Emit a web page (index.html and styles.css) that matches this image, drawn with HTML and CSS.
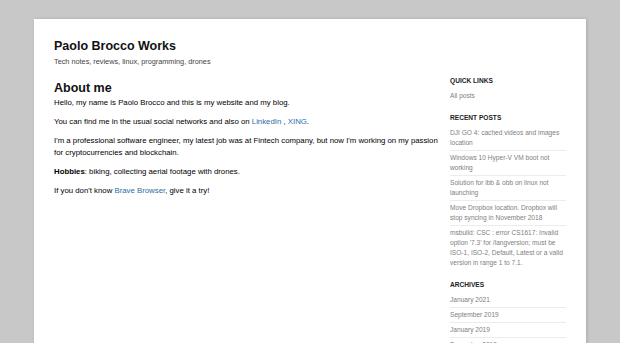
FILE: index.html
```html
<!DOCTYPE html>
<html lang="en">
<head>
  <meta charset="UTF-8">
  <meta name="viewport" content="width=device-width, initial-scale=1.0">
  <title>Paolo Brocco Works</title>
  <link rel="stylesheet" href="styles.css">
</head>
<body>
  <div class="page">
    <div class="header">
      <h1>Paolo Brocco Works</h1>
      <p class="tagline">Tech notes, reviews, linux, programming, drones</p>
    </div>

    <div class="content">
      <div class="main">
        <h2>About me</h2>
        <p>Hello, my name is Paolo Brocco and this is my website and my blog.</p>
        <p>You can find me in the usual social networks and also on <a href="#">LinkedIn</a> , <a href="#">XING</a>.</p>
        <p>I'm a professional software engineer, my latest job was at Fintech company, but now I'm working on my passion for cryptocurrencies and blockchain.</p>
        <p><b>Hobbies</b>: biking, collecting aerial footage with drones.</p>
        <p>If you don't know <a href="#">Brave Browser</a>, give it a try!</p>
      </div>

      <div class="sidebar">
        <h4>Quick links</h4>
        <ul class="plain">
          <li>All posts</li>
        </ul>

        <h4>Recent posts</h4>
        <ul>
          <li>DJI GO 4: cached videos and images location</li>
          <li>Windows 10 Hyper-V VM boot not working</li>
          <li>Solution for ibb &amp; obb on linux not launching</li>
          <li>Move Dropbox location. Dropbox will stop syncing in November 2018</li>
          <li>msbuild: CSC : error CS1617: Invalid option '7.3' for /langversion; must be ISO-1, ISO-2, Default, Latest or a valid version in range 1 to 7.1.</li>
        </ul>

        <h4>Archives</h4>
        <ul>
          <li>January 2021</li>
          <li>September 2019</li>
          <li>January 2019</li>
          <li>December 2018</li>
        </ul>
      </div>
    </div>
  </div>
</body>
</html>
```

FILE: styles.css
```css
body {
  margin: 0;
  background-color: #c8c8c8;
  font-family: "Liberation Sans", Arial, sans-serif;
  color: #000;
  height: 343px;
  overflow: hidden;
}
.page {
  background-color: #fff;
  width: 552px;
  margin: 19px 0 0 34px;
  padding: 20px 20px 0 20px;
  box-sizing: border-box;
  min-height: 400px;
  box-shadow: 1px 0 3px rgba(0,0,0,0.15);
}
h1 {
  font-size: 12.5px;
  line-height: 15px;
  margin: 0;
  color: #111;
}
.tagline {
  font-size: 7.3px;
  line-height: 9px;
  color: #444;
  margin: 3px 0 0 0;
}
.content {
  display: flex;
  gap: 4px;
  margin-top: 11px;
}
.main {
  width: 392px;
  flex-shrink: 0;
}
h2 {
  font-size: 12.5px;
  line-height: 15px;
  margin: 4px 0 1px 0;
  color: #111;
}
.main p {
  font-size: 7.8px;
  line-height: 12px;
  margin: 0 0 7px 0;
}
a {
  color: #1f6ea8;
  text-decoration: none;
}
.sidebar {
  width: 117px;
}
h4 {
  font-size: 6.6px;
  line-height: 8px;
  text-transform: uppercase;
  margin: 0 0 4px 0;
  color: #222;
}
.sidebar ul {
  list-style: none;
  margin: 0 0 11px 0;
  padding: 0;
}
.sidebar li {
  font-size: 6.6px;
  line-height: 10px;
  color: #808080;
  padding: 2px 0;
  border-bottom: 1px solid #ececec;
}
.sidebar ul.plain li {
  border-bottom: none;
}
.sidebar ul li:last-child {
  border-bottom: none;
}
```
